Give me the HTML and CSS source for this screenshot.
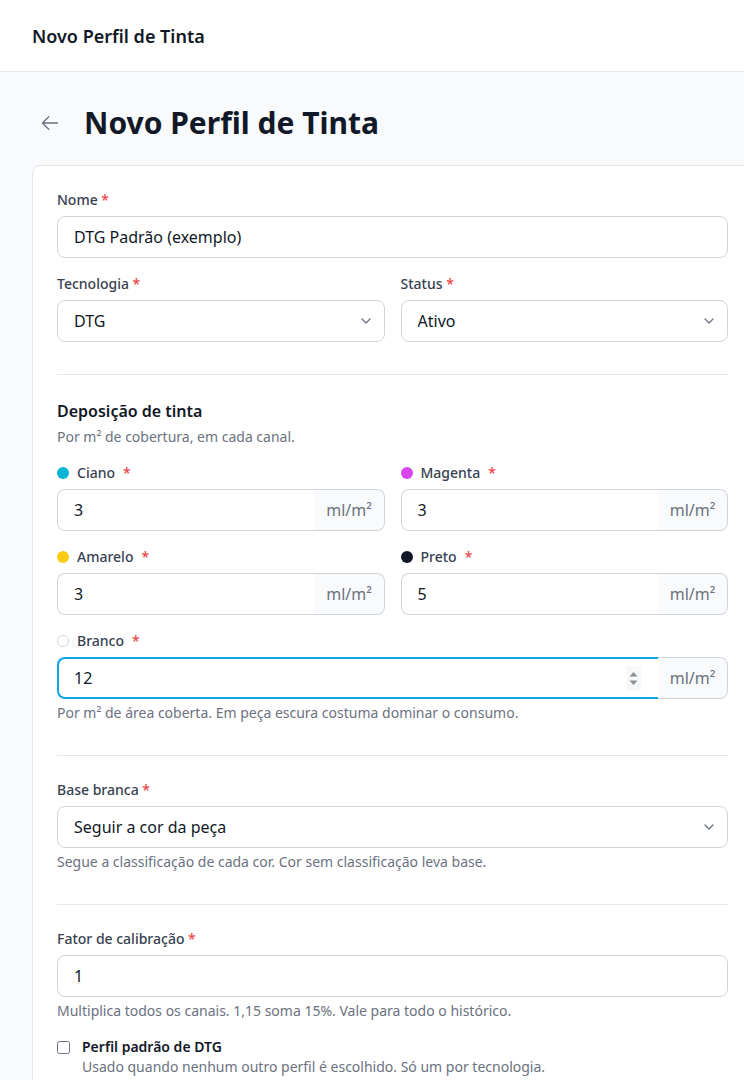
FILE: index.html
```html
<!DOCTYPE html>
<html lang="pt-BR">
<head>
<meta charset="utf-8">
<title>Novo Perfil de Tinta</title>
<link rel="stylesheet" href="styles.css">
</head>
<body>
<header class="topbar"><span class="topbar-title">Novo Perfil de Tinta</span></header>
<main class="page">
  <div class="page-head">
    <button class="back" type="button" aria-label="Voltar">
      <svg viewBox="0 0 24 24" width="20" height="20" fill="none" stroke="currentColor" stroke-width="1.6" stroke-linecap="round" stroke-linejoin="round"><path d="M10.5 19.5 3 12l7.5-7.5M3 12h18"/></svg>
    </button>
    <h1 class="page-title">Novo Perfil de Tinta</h1>
  </div>

  <form class="card">
    <div class="field">
      <label class="label">Nome <span class="req">*</span></label>
      <input class="input" type="text" value="DTG Padrão (exemplo)">
    </div>

    <div class="grid2">
      <div class="field">
        <label class="label">Tecnologia <span class="req">*</span></label>
        <div class="select-wrap">
          <select class="input select"><option>DTG</option></select>
          <svg class="chev" viewBox="0 0 16 16" width="16" height="16" fill="none" stroke="currentColor" stroke-width="1.3" stroke-linecap="round" stroke-linejoin="round"><path d="M4 6l4 4 4-4"/></svg>
        </div>
      </div>
      <div class="field">
        <label class="label">Status <span class="req">*</span></label>
        <div class="select-wrap">
          <select class="input select"><option>Ativo</option></select>
          <svg class="chev" viewBox="0 0 16 16" width="16" height="16" fill="none" stroke="currentColor" stroke-width="1.3" stroke-linecap="round" stroke-linejoin="round"><path d="M4 6l4 4 4-4"/></svg>
        </div>
      </div>
    </div>

    <hr class="divider">

    <div class="section-head">
      <h2 class="section-title">Deposição de tinta</h2>
      <p class="section-sub">Por m² de cobertura, em cada canal.</p>
    </div>

    <div class="grid2 channels">
      <div class="field">
        <label class="label channel-label"><span class="dot dot-cyan"></span>Ciano<span class="req">*</span></label>
        <div class="group"><input class="group-input" type="text" value="3"><span class="addon">ml/m²</span></div>
      </div>
      <div class="field">
        <label class="label channel-label"><span class="dot dot-magenta"></span>Magenta<span class="req">*</span></label>
        <div class="group"><input class="group-input" type="text" value="3"><span class="addon">ml/m²</span></div>
      </div>
      <div class="field">
        <label class="label channel-label"><span class="dot dot-yellow"></span>Amarelo<span class="req">*</span></label>
        <div class="group"><input class="group-input" type="text" value="3"><span class="addon">ml/m²</span></div>
      </div>
      <div class="field">
        <label class="label channel-label"><span class="dot dot-black"></span>Preto<span class="req">*</span></label>
        <div class="group"><input class="group-input" type="text" value="5"><span class="addon">ml/m²</span></div>
      </div>
      <div class="field span2">
        <label class="label channel-label"><span class="dot dot-white"></span>Branco<span class="req">*</span></label>
        <div class="group">
          <div class="group-input is-focus">
            <input class="bare" type="text" value="12">
            <span class="spin">
              <svg viewBox="0 0 15 25" width="15" height="25"><path d="M3.5 10.5 7.5 6l4 4.5z" fill="#8b8f96"/><path d="M3.5 14.5h8l-4 4.5z" fill="#8b8f96"/></svg>
            </span>
          </div>
          <span class="addon">ml/m²</span>
        </div>
        <p class="hint">Por m² de área coberta. Em peça escura costuma dominar o consumo.</p>
      </div>
    </div>

    <hr class="divider">

    <div class="field">
      <label class="label">Base branca <span class="req">*</span></label>
      <div class="select-wrap">
        <select class="input select"><option>Seguir a cor da peça</option></select>
        <svg class="chev" viewBox="0 0 16 16" width="16" height="16" fill="none" stroke="currentColor" stroke-width="1.3" stroke-linecap="round" stroke-linejoin="round"><path d="M4 6l4 4 4-4"/></svg>
      </div>
      <p class="hint">Segue a classificação de cada cor. Cor sem classificação leva base.</p>
    </div>

    <hr class="divider">

    <div class="field">
      <label class="label">Fator de calibração <span class="req">*</span></label>
      <input class="input" type="text" value="1">
      <p class="hint">Multiplica todos os canais. 1,15 soma 15%. Vale para todo o histórico.</p>
    </div>

    <label class="check-row">
      <input class="check" type="checkbox">
      <span class="check-text">
        <span class="check-title">Perfil padrão de DTG</span>
        <span class="check-sub">Usado quando nenhum outro perfil é escolhido. Só um por tecnologia.</span>
      </span>
    </label>
  </form>
</main>
</body>
</html>
```

FILE: styles.css
```css
* { box-sizing: border-box; }

html, body { overflow-x: hidden; }

body {
  margin: 0;
  font-family: "Noto Sans", "Open Sans", sans-serif;
  background: #f9fafb;
  color: #111827;
}

.topbar {
  height: 72px;
  background: #ffffff;
  border-bottom: 1px solid #e5e7eb;
  display: flex;
  align-items: center;
  padding: 0 32px;
}

.topbar-title {
  font-size: 18px;
  font-weight: 600;
  color: #111827;
}

.page {
  padding: 33px 0 0 32px;
}

.page-head {
  display: flex;
  align-items: center;
  gap: 16px;
  height: 36px;
  margin-bottom: 24px;
}

.back {
  width: 36px;
  height: 36px;
  padding: 8px;
  border: 0;
  background: none;
  color: #6b7280;
  display: flex;
  align-items: center;
  justify-content: center;
  cursor: pointer;
}

.page-title {
  margin: 0;
  font-size: 30px;
  line-height: 36px;
  font-weight: 700;
  color: #111827;
}

.card {
  width: 721px;
  background: #ffffff;
  border: 1px solid #e5e7eb;
  border-radius: 8px;
  padding: 24px;
  display: flex;
  flex-direction: column;
  gap: 16px;
}

.field { display: flex; flex-direction: column; min-width: 0; }

.label {
  display: block;
  font-size: 14px;
  line-height: 20px;
  font-weight: 500;
  color: #374151;
  margin-bottom: 6px;
}

.req { color: #ef4444; }

.input {
  display: block;
  width: 100%;
  height: 42px;
  border: 1px solid #d1d5db;
  border-radius: 8px;
  padding: 0 16px;
  font-family: inherit;
  font-size: 16px;
  color: #111827;
  background: #ffffff;
  outline: none;
}

.select-wrap { position: relative; }

.select {
  appearance: none;
  -webkit-appearance: none;
  padding-right: 40px;
}

.chev {
  position: absolute;
  right: 11px;
  top: 13px;
  color: #6b7280;
  pointer-events: none;
}

.grid2 {
  display: grid;
  grid-template-columns: minmax(0, 1fr) minmax(0, 1fr);
  gap: 16px;
}

.span2 { grid-column: 1 / -1; }

.divider {
  border: 0;
  border-top: 1px solid #e5e7eb;
  margin: 16px 0 8px;
  height: 0;
}

.section-head { display: flex; flex-direction: column; gap: 4px; }

.section-title {
  margin: 0;
  font-size: 16px;
  line-height: 24px;
  font-weight: 600;
  color: #111827;
}

.section-sub {
  margin: 0;
  font-size: 14px;
  line-height: 20px;
  color: #6b7280;
}

.channel-label {
  display: flex;
  align-items: center;
  gap: 8px;
}

.dot {
  width: 12px;
  height: 12px;
  border-radius: 50%;
  flex: none;
}
.dot-cyan { background: #06b6d4; }
.dot-magenta { background: #d946ef; }
.dot-yellow { background: #facc15; }
.dot-black { background: #111827; }
.dot-white { background: #ffffff; border: 1px solid #d1d5db; }

.group {
  display: flex;
  height: 42px;
  min-width: 0;
}

.group-input {
  flex: 1;
  min-width: 0;
  width: 0;
  height: 42px;
  border: 1px solid #d1d5db;
  border-right: 0;
  border-radius: 8px 0 0 8px;
  padding: 0 16px;
  font-family: inherit;
  font-size: 16px;
  color: #111827;
  background: #ffffff;
  outline: none;
}

.group-input.is-focus {
  display: flex;
  align-items: center;
  border: 2px solid #0ea5e9;
  border-right: 0;
  padding: 0 17px 0 15px;
}

.bare {
  flex: 1;
  min-width: 0;
  width: 0;
  border: 0;
  padding: 0;
  font-family: inherit;
  font-size: 16px;
  color: #111827;
  background: transparent;
  outline: none;
}

.spin {
  display: flex;
  background: #f7f8f9;
}

.addon {
  flex: none;
  width: 70px;
  display: flex;
  align-items: center;
  justify-content: center;
  border: 1px solid #d1d5db;
  border-left: 0;
  border-radius: 0 8px 8px 0;
  background: #f9fafb;
  font-size: 16px;
  color: #6b7280;
}

.hint {
  margin: 4px 0 0;
  font-size: 14px;
  line-height: 20px;
  color: #6b7280;
}

.check-row {
  display: flex;
  gap: 12px;
  align-items: flex-start;
}

.check {
  appearance: none;
  -webkit-appearance: none;
  width: 13px;
  height: 13px;
  margin: 4px 0 0;
  border: 1px solid #6b7280;
  border-radius: 2.5px;
  background: #ffffff;
  flex: none;
}

.check-text { display: flex; flex-direction: column; }

.check-title {
  font-size: 14px;
  line-height: 20px;
  font-weight: 600;
  color: #111827;
}

.check-sub {
  font-size: 14px;
  line-height: 20px;
  color: #6b7280;
}
```
